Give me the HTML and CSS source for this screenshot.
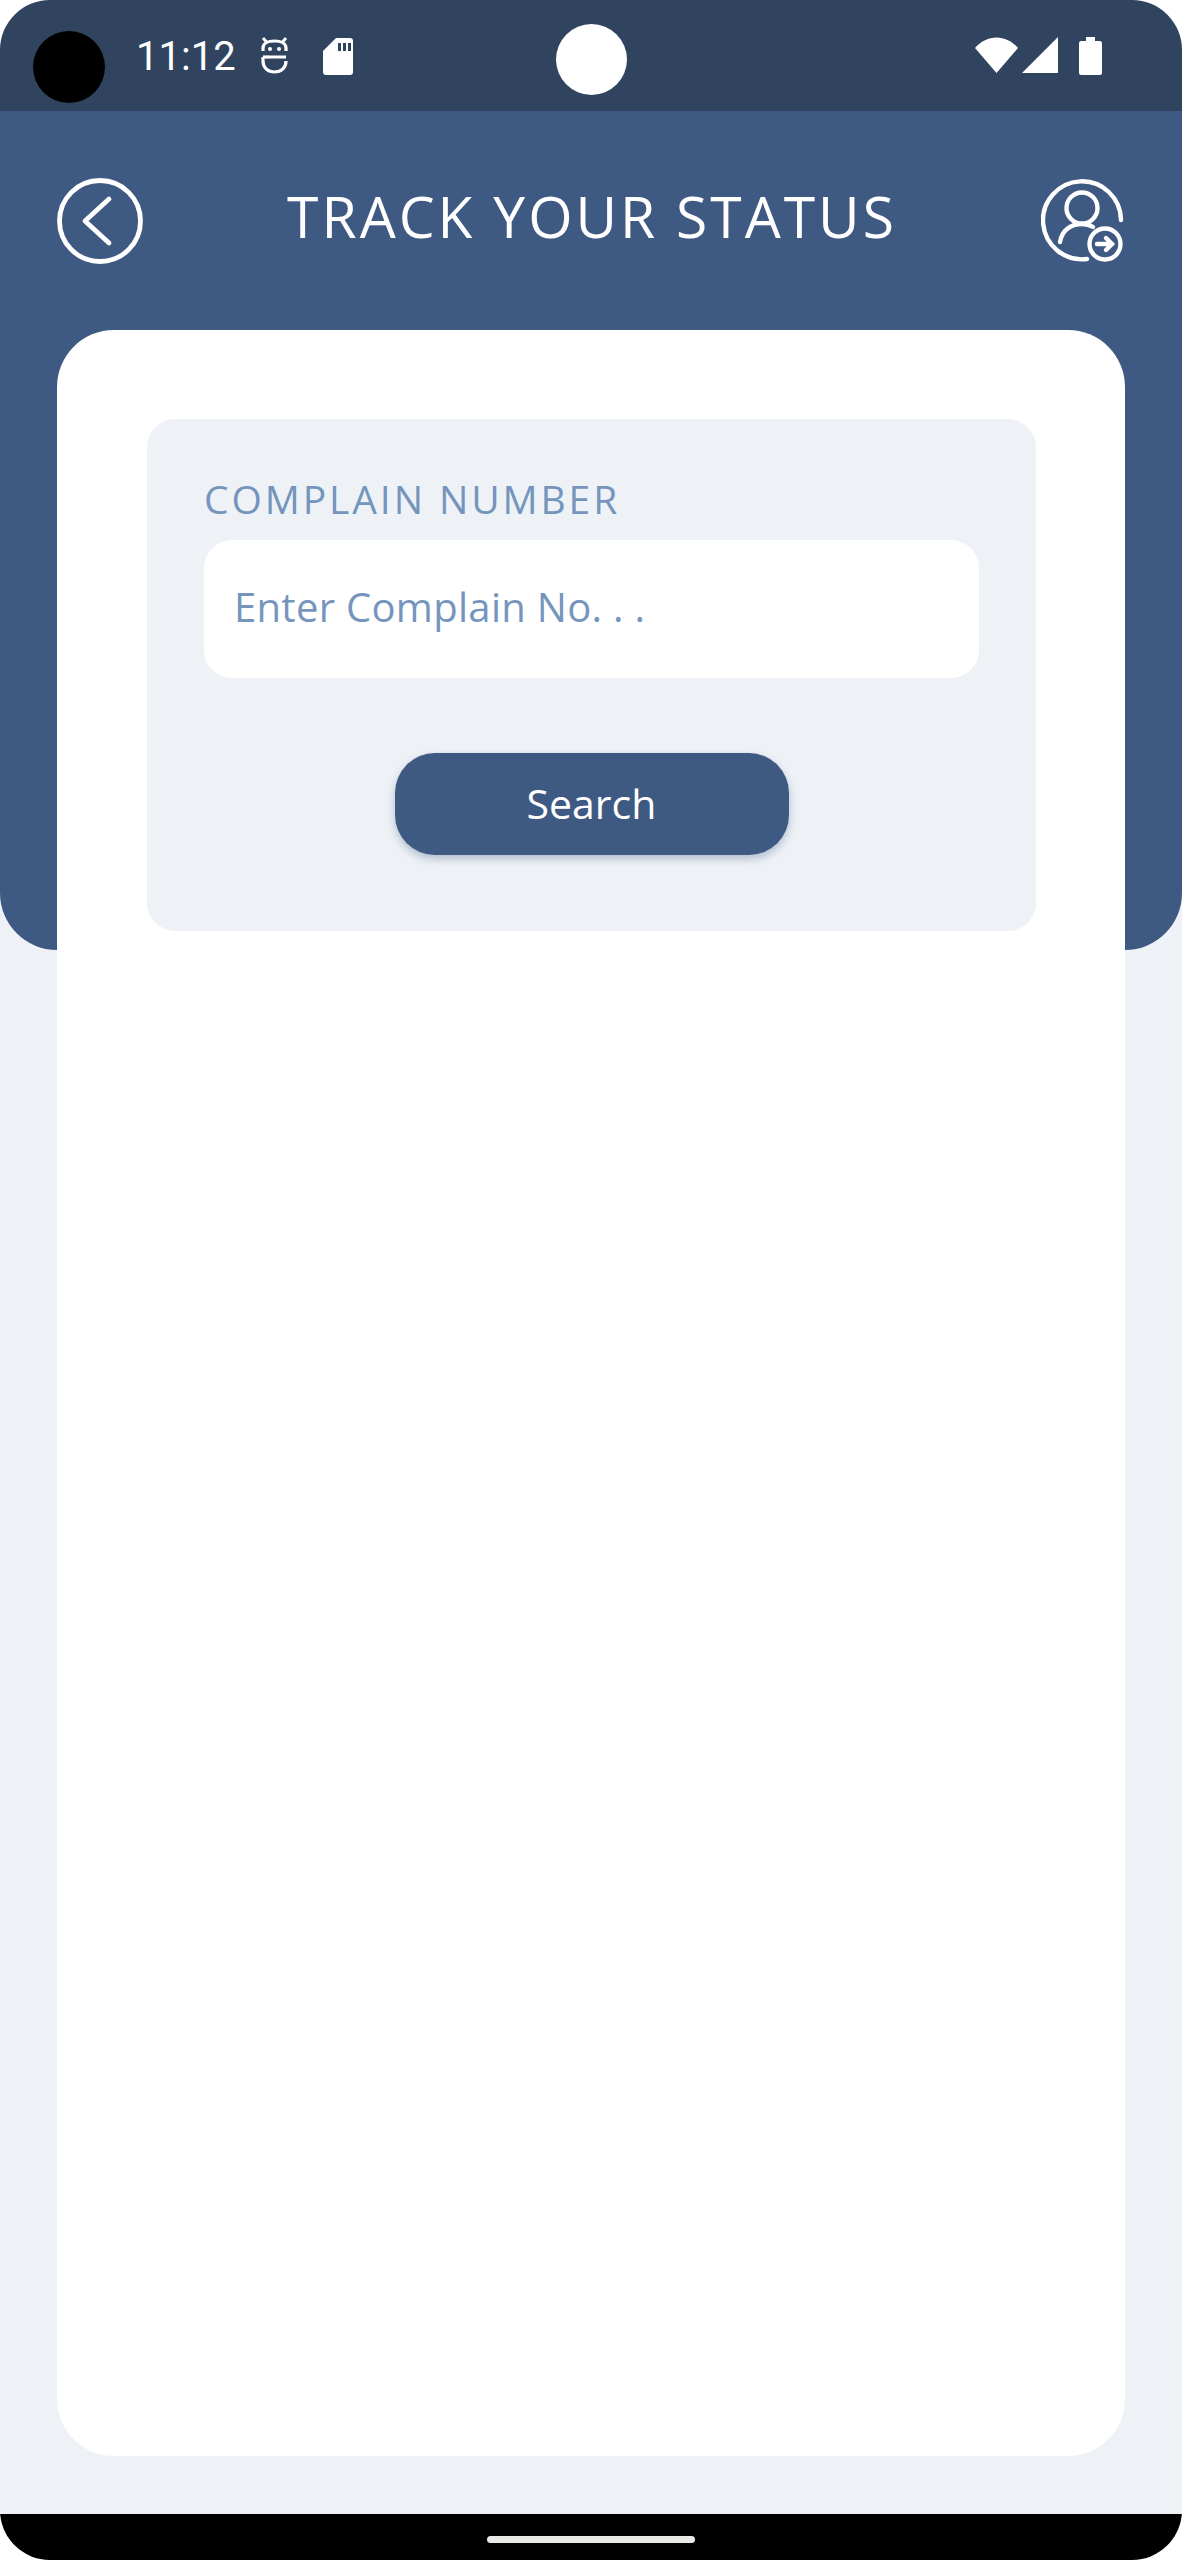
FILE: index.html
```html
<!DOCTYPE html>
<html lang="en">
<head>
  <meta charset="UTF-8" />
  <title>Track Your Status</title>
  <meta name="viewport" content="width=device-width, initial-scale=1" />
  <link rel="stylesheet" href="styles.css">
</head>
<body>
  <div class="screen">

    <!-- Status bar -->
    <div class="status-bar">
      <div class="status-left">
        <span class="camera-dot"></span>
        <span class="clock">11:12</span>
        <svg class="icon-robot" viewBox="0 0 27 37" width="27" height="37" fill="none" stroke="#fff" stroke-width="3.2">
          <path d="M2 1 L5.500 5 M25 1 L21.500 5" stroke-width="2.8" />
          <path d="M2 14 V11 C2 7 6 4 13.500 4 C21 4 25 7 25 11 V14" />
          <path d="M9 20 H25 M2 20 V24 C2 31 7 35 13.500 35 C20 35 25 31 25 24 V25" />
          <path d="M2 20 H9" />
          <circle cx="9" cy="12" r="2" fill="#fff" stroke="none" />
          <circle cx="18" cy="12" r="2" fill="#fff" stroke="none" />
        </svg>
        <svg class="icon-sd" viewBox="0 0 30 37" width="30" height="37">
          <path fill="#fff" d="M13 0 H27 C29 0 30 1 30 3 V34 C30 36 29 37 27 37 H3 C1 37 0 36 0 34 V13 Z" />
          <path fill="#30435f" d="M15 5 H18 V13 H15 Z M20 5 H23 V13 H20 Z M25 5 H28 V13 H25 Z" />
        </svg>
      </div>
      <span class="camera-hole"></span>
      <div class="status-right">
        <svg viewBox="0 0 43 36" width="43" height="36">
          <path fill="#fff" d="M0 11 C12 -3 31 -3 43 11 L21.500 36 Z" />
        </svg>
        <svg viewBox="0 0 36 36" width="36" height="36">
          <path fill="#fff" d="M36 0 V36 H0 Z" />
        </svg>
        <svg class="icon-battery" viewBox="0 0 23 38" width="23" height="38">
          <path fill="#fff" d="M7 0 H16 V4 H21 C22 4 23 5 23 6 V36 C23 37 22 38 21 38 H2 C1 38 0 37 0 36 V6 C0 5 1 4 2 4 H7 Z" />
        </svg>
      </div>
    </div>

    <!-- Blue header -->
    <div class="header">
      <div class="top-row">
        <svg viewBox="0 0 86 86" width="86" height="86" fill="none" stroke="#fff" stroke-width="4.800" stroke-linecap="round" stroke-linejoin="round">
          <circle cx="43" cy="43" r="40.500" />
          <path d="M52 21 L28 43 L52 65" />
        </svg>
        <h1 class="title">TRACK YOUR STATUS</h1>
        <svg viewBox="0 0 84 86" width="84" height="86" fill="none" stroke="#fff" stroke-width="4.400" stroke-linecap="round">
          <path d="M80 42 A39 39 0 1 0 46 81" />
          <circle cx="41" cy="30" r="15.500" />
          <path d="M19 64 C21 52 30 46 41 46 C45 46 49 47 52 49" />
          <circle cx="64" cy="66" r="15.500" />
          <path d="M56 66 H71 M65 60 L71 66 L65 72" />
        </svg>
      </div>
    </div>

    <!-- White card -->
    <div class="card">
      <div class="panel">
        <label class="field-label" for="complainNo">COMPLAIN NUMBER</label>
        <input id="complainNo" class="field-input" type="text" placeholder="Enter Complain No. . ." />
        <button class="search-btn">Search</button>
      </div>
    </div>

    <!-- Nav bar -->
    <div class="nav-bar">
      <span class="nav-pill"></span>
    </div>

  </div>
</body>
</html>
```

FILE: styles.css
```css
* {
  box-sizing: border-box;
}
body {
  margin: 0;
  background-color: #fff;
  font-family: "Open Sans", sans-serif;
}
.screen {
  width: 1182px;
  height: 2560px;
  display: flex;
  flex-direction: column;
  background-color: #eef2f7;
  border-radius: 50px;
  overflow: hidden;
}
.status-bar {
  position: relative;
  height: 111px;
  flex-shrink: 0;
  display: flex;
  justify-content: space-between;
  align-items: flex-start;
  padding: 31px 80px 0 33px;
  background-color: #30435f;
}
.status-left {
  display: flex;
  align-items: flex-start;
}
.camera-dot {
  width: 72px;
  height: 72px;
  border-radius: 50%;
  background-color: #000;
}
.clock {
  width: 101px;
  margin: 3px 24px 0 31px;
  color: #fff;
  font-family: Roboto, sans-serif;
  font-size: 40px;
  line-height: 46px;
}
.icon-robot {
  margin: 6px 35px 0 0;
}
.icon-sd {
  margin-top: 7px;
}
.camera-hole {
  position: absolute;
  left: 556px;
  top: 24px;
  width: 71px;
  height: 71px;
  border-radius: 50%;
  background-color: #fff;
}
.status-right {
  display: flex;
  align-items: flex-start;
  gap: 4px;
  padding-top: 6px;
}
.icon-battery {
  margin-left: 17px;
}
.header {
  height: 839px;
  flex-shrink: 0;
  padding: 67px 57px 0;
  background-color: #3f5a82;
  border-radius: 0 0 57px 57px;
}
.top-row {
  display: flex;
  justify-content: space-between;
  align-items: center;
}
.title {
  margin: 0;
  padding-bottom: 10px;
  color: #fff;
  font-size: 57px;
  font-weight: 400;
  letter-spacing: 3px;
  line-height: 76px;
}
.card {
  width: 1068px;
  height: 2126px;
  flex-shrink: 0;
  margin: -620px 57px 0;
  padding: 89px 89px 0 90px;
  background-color: #fff;
  border-radius: 57px;
}
.panel {
  height: 512px;
  display: flex;
  flex-direction: column;
  padding: 52px 57px 0;
  background-color: #eef2f7;
  border-radius: 28px;
}
.field-label {
  height: 69px;
  color: #7595bd;
  font-size: 39px;
  letter-spacing: 2.900px;
  line-height: 56px;
}
.field-input {
  width: 100%;
  height: 138px;
  padding: 0 30px 6px;
  border: none;
  border-radius: 28px;
  background-color: #fff;
  color: #7595bd;
  font-family: inherit;
  font-size: 40px;
  letter-spacing: 0.300px;
}
.field-input::placeholder {
  color: #7595bd;
  opacity: 1;
}
.search-btn {
  align-self: center;
  width: 394px;
  height: 102px;
  margin-top: 75px;
  padding: 0 0 3px;
  border: none;
  border-radius: 40px;
  background-color: #3f5a82;
  color: #fff;
  font-family: inherit;
  font-size: 41px;
  box-shadow: 0 4px 8px rgba(63, 90, 130, 0.35);
  cursor: pointer;
}
.nav-bar {
  height: 46px;
  flex-shrink: 0;
  display: flex;
  justify-content: center;
  padding-top: 22px;
  margin-top: auto;
  background-color: #000;
}
.nav-pill {
  width: 208px;
  height: 7px;
  border-radius: 4px;
  background-color: #e8e8e4;
}
```
